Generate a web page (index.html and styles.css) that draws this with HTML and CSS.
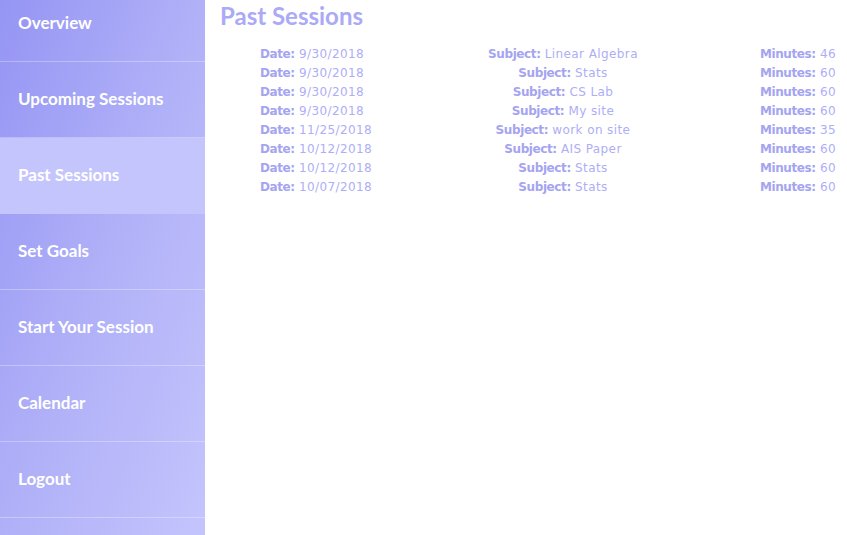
FILE: index.html
```html
<!DOCTYPE html>
<html>
<head>
<meta charset="utf-8">
<link rel="stylesheet" href="styles.css">
</head>
<body>
<div class="layout">
  <nav class="sidebar">
    <a class="nav-item">Overview</a>
    <a class="nav-item">Upcoming Sessions</a>
    <a class="nav-item active">Past Sessions</a>
    <a class="nav-item">Set Goals</a>
    <a class="nav-item">Start Your Session</a>
    <a class="nav-item">Calendar</a>
    <a class="nav-item">Logout</a>
  </nav>
  <main class="content">
    <h1 class="title">Past Sessions</h1>
    <div class="sessions">
      <div class="row"><span class="c1"><b>Date:</b> 9/30/2018</span><span class="c2"><b>Subject:</b> Linear Algebra</span><span class="c3"><b>Minutes:</b> 46</span></div>
      <div class="row"><span class="c1"><b>Date:</b> 9/30/2018</span><span class="c2"><b>Subject:</b> Stats</span><span class="c3"><b>Minutes:</b> 60</span></div>
      <div class="row"><span class="c1"><b>Date:</b> 9/30/2018</span><span class="c2"><b>Subject:</b> CS Lab</span><span class="c3"><b>Minutes:</b> 60</span></div>
      <div class="row"><span class="c1"><b>Date:</b> 9/30/2018</span><span class="c2"><b>Subject:</b> My site</span><span class="c3"><b>Minutes:</b> 60</span></div>
      <div class="row"><span class="c1"><b>Date:</b> 11/25/2018</span><span class="c2"><b>Subject:</b> work on site</span><span class="c3"><b>Minutes:</b> 35</span></div>
      <div class="row"><span class="c1"><b>Date:</b> 10/12/2018</span><span class="c2"><b>Subject:</b> AIS Paper</span><span class="c3"><b>Minutes:</b> 60</span></div>
      <div class="row"><span class="c1"><b>Date:</b> 10/12/2018</span><span class="c2"><b>Subject:</b> Stats</span><span class="c3"><b>Minutes:</b> 60</span></div>
      <div class="row"><span class="c1"><b>Date:</b> 10/07/2018</span><span class="c2"><b>Subject:</b> Stats</span><span class="c3"><b>Minutes:</b> 60</span></div>
    </div>
  </main>
</div>
</body>
</html>
```
FILE: styles.css
```css
html, body {
  margin: 0;
  padding: 0;
  height: 100%;
  overflow: hidden;
  background: #ffffff;
}
.layout {
  display: flex;
  height: 100%;
}
.sidebar {
  width: 205px;
  flex: none;
  margin-top: -14px;
  height: calc(100% + 14px);
  background: linear-gradient(110deg, #9494f4 0%, #b0b0f8 50%, #c4c4fd 100%);
  display: flex;
  flex-direction: column;
}
.nav-item {
  display: flex;
  align-items: center;
  height: 73px;
  padding-bottom: 2px;
  border-bottom: 1px solid rgba(255,255,255,0.3);
  padding-left: 18px;
  font-family: "Lato", sans-serif;
  font-weight: bold;
  font-size: 17px;
  color: #ffffff;
  flex: none;
}
.nav-item.active {
  background: #c5c5fd;
  border-bottom-color: #c5c5fd;
}
.content {
  flex: 1;
  padding: 0 11px 0 15px;
}
.title {
  margin: 0;
  padding-top: 2px;
  font-family: "Lato", sans-serif;
  font-weight: bold;
  font-size: 24px;
  line-height: 28px;
  color: #aaaaf6;
}
.sessions {
  margin-top: 15px;
  padding-left: 40px;
  font-family: "DejaVu Sans", sans-serif;
  font-size: 12px;
  color: #aeaef6;
  letter-spacing: 0.4px;
}
.row {
  display: grid;
  grid-template-columns: 203px 200px 1fr;
  height: 19px;
  line-height: 19px;
}
.row b {
  color: #a4a4f1;
  letter-spacing: -0.4px;
}
.c2 { text-align: center; }
.c3 { text-align: right; }
```
